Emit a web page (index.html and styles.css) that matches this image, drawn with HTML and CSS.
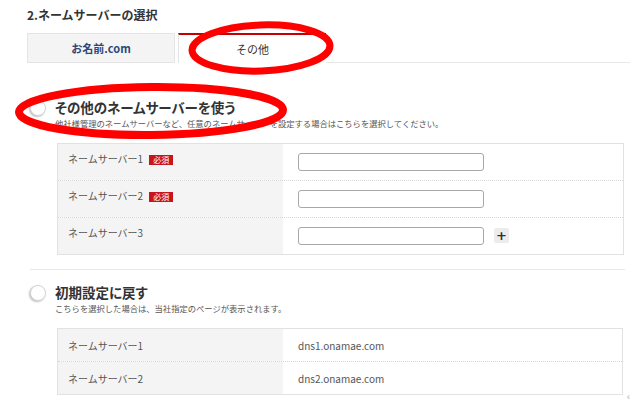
FILE: index.html
```html
<!DOCTYPE html>
<html lang="ja">
<head>
<meta charset="utf-8">
<title>ネームサーバーの選択</title>
<link rel="stylesheet" href="styles.css">
</head>
<body>
<div class="page">
  <h2 class="title">2.ネームサーバーの選択</h2>
  <div class="tabs">
    <div class="tab tab-a">お名前.com</div>
    <div class="tab tab-b">その他</div>
    <div class="tab-rest"></div>
  </div>

  <section class="option first">
    <div class="opt-head">
      <span class="radio"></span>
      <div class="opt-text">
        <div class="opt-label">その他のネームサーバーを使う</div>
        <div class="opt-desc">他社様管理のネームサーバーなど、任意のネームサーバーを設定する場合はこちらを選択してください。</div>
      </div>
    </div>
    <div class="grid grid-input">
      <div class="row">
        <div class="cell-label">ネームサーバー1<span class="badge">必須</span></div>
        <div class="cell-value"><span class="input"></span></div>
      </div>
      <div class="row">
        <div class="cell-label">ネームサーバー2<span class="badge">必須</span></div>
        <div class="cell-value"><span class="input"></span></div>
      </div>
      <div class="row">
        <div class="cell-label">ネームサーバー3</div>
        <div class="cell-value"><span class="input"></span><span class="plus">+</span></div>
      </div>
    </div>
  </section>

  <div class="sep"></div>

  <section class="option second">
    <div class="opt-head">
      <span class="radio"></span>
      <div class="opt-text">
        <div class="opt-label">初期設定に戻す</div>
        <div class="opt-desc">こちらを選択した場合は、当社指定のページが表示されます。</div>
      </div>
    </div>
    <div class="grid grid-static">
      <div class="row">
        <div class="cell-label">ネームサーバー1</div>
        <div class="cell-value">dns1.onamae.com</div>
      </div>
      <div class="row">
        <div class="cell-label">ネームサーバー2</div>
        <div class="cell-value">dns2.onamae.com</div>
      </div>
    </div>
  </section>

  <span class="corner">‹</span>

  <svg class="marks" width="640" height="405" viewBox="0 0 640 405" aria-hidden="true">
    <ellipse cx="261" cy="48" rx="69" ry="23" fill="none" stroke="#f00" stroke-width="7" transform="rotate(-2 261 48)"/>
    <ellipse cx="151" cy="111" rx="132" ry="24" fill="none" stroke="#f00" stroke-width="8" transform="rotate(-0.5 151 111)"/>
  </svg>
</div>
</body>
</html>
```

FILE: styles.css
```css
* { box-sizing: border-box; }
html, body { margin: 0; padding: 0; background: #fff; }
body {
  font-family: "Noto Sans CJK JP", "Noto Sans", "Liberation Sans", sans-serif;
  color: #333;
  width: 640px;
  height: 405px;
  overflow: hidden;
}
.page {
  position: relative;
  width: 640px;
  height: 405px;
  padding: 7px 10px 0 27px;
}
.title {
  margin: 0;
  font-size: 12px;
  line-height: 16px;
  font-weight: bold;
  color: #333;
}
.tabs {
  display: flex;
  margin-top: 10px;
  height: 30px;
}
.tab {
  width: 148px;
  height: 30px;
  display: flex;
  align-items: center;
  justify-content: center;
  font-size: 11px;
}
.tab-a {
  background: #f4f4f4;
  border: 1px solid #e4e4e4;
  color: #2d4779;
  font-weight: bold;
  margin-right: 3px;
}
.tab-b {
  background: #fff;
  border-top: 2px solid #c40000;
  border-left: 1px solid #e4e4e4;
  color: #333;
}
.tab-rest {
  flex: 1;
  border-bottom: 1px solid #e8e8e8;
}

.option.first { margin-top: 35px; }
.option.second { margin-top: 13px; }
.opt-head {
  display: flex;
  align-items: flex-start;
  padding-left: 3px;
}
.radio {
  width: 16px;
  height: 16px;
  border-radius: 50%;
  border: 1px solid #d4d4d4;
  background: #fff;
  box-shadow: -1px 1px 2px rgba(0,0,0,0.25);
  margin-top: 2px;
  margin-right: 9px;
  flex: none;
}
.opt-label {
  font-size: 13.5px;
  line-height: 18px;
  font-weight: bold;
  color: #333;
  font-feature-settings: "palt";
}
.opt-desc {
  font-size: 8.3px;
  line-height: 12px;
  color: #555;
  margin-top: 1px;
}

.grid {
  margin-top: 14px;
  margin-left: 30px;
  border: 1px solid #e2e2e2;
}
.grid-input { width: 567px; }
.grid-static { width: 566px; }
.row {
  display: grid;
  grid-template-columns: 225px 1fr;
}
.row + .row { border-top: 1px dotted #d6d6d6; }
.grid-input .row { height: 37px; }
.grid-input .row:first-child { height: 36px; }
.grid-static .row { height: 33px; }
.grid-static .row:first-child { height: 32px; }
.cell-label {
  background: #f4f4f4;
  padding-left: 10px;
  font-size: 10px;
  color: #555;
  display: flex;
  align-items: flex-start;
}
.grid-input .cell-label { padding-top: 8px; line-height: 14px; }
.grid-static .cell-label { align-items: center; }
.cell-value {
  background: #fff;
  padding-left: 15px;
  font-size: 10px;
  color: #555;
  display: flex;
}
.grid-input .cell-value { align-items: flex-start; padding-top: 9px; }
.grid-static .cell-value { align-items: center; }
.badge {
  display: inline-block;
  margin-left: 6px;
  margin-top: 3px;
  width: 24px;
  height: 10px;
  background: #c8141e;
  color: #fff;
  font-size: 8px;
  line-height: 10px;
  text-align: center;
}
.input {
  display: block;
  width: 186px;
  height: 18px;
  border: 1px solid #a8a8a8;
  border-radius: 3px;
  background: #fff;
}
.plus {
  display: block;
  width: 15px;
  height: 15px;
  margin-left: 10px;
  margin-top: 1px;
  background: #ececec;
  border-radius: 2px;
  color: #333;
  font-family: "DejaVu Sans", sans-serif;
  font-weight: bold;
  font-size: 13px;
  line-height: 15px;
  text-align: center;
}
.sep {
  margin-top: 14px;
  margin-left: 3px;
  width: 595px;
  height: 1px;
  background: #e8e8e8;
}
.corner {
  position: absolute;
  left: 627px;
  top: 390px;
  font-size: 10px;
  line-height: 12px;
  color: #aaa;
}
.marks {
  position: absolute;
  left: 0;
  top: 0;
  pointer-events: none;
}
```
